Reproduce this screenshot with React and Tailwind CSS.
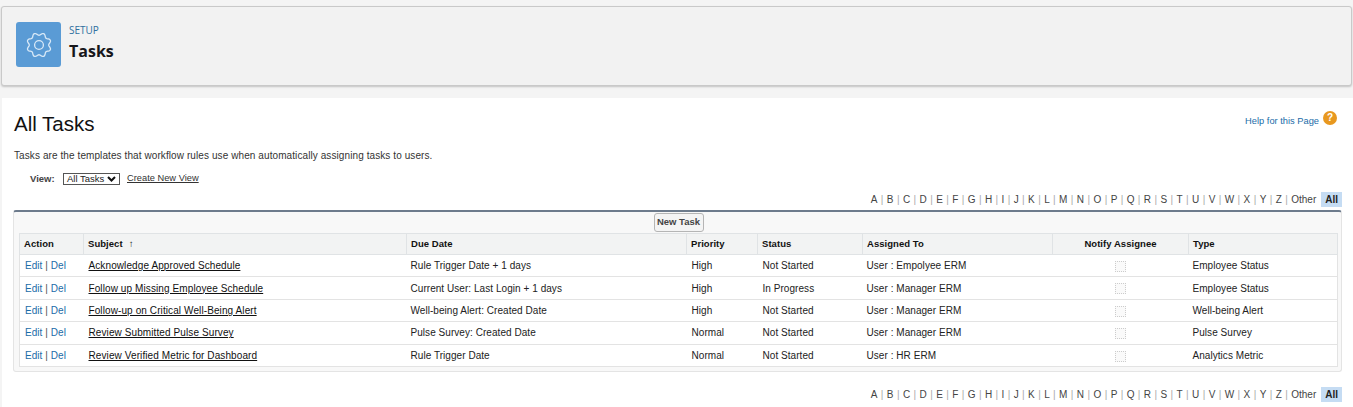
const letters = "A B C D E F G H I J K L M N O P Q R S T U V W X Y Z Other".split(" ");

const rows = [
  ["Acknowledge Approved Schedule", "Rule Trigger Date + 1 days", "High", "Not Started", "User : Empolyee ERM", "Employee Status"],
  ["Follow up Missing Employee Schedule", "Current User: Last Login + 1 days", "High", "In Progress", "User : Manager ERM", "Employee Status"],
  ["Follow-up on Critical Well-Being Alert", "Well-being Alert: Created Date", "High", "Not Started", "User : Manager ERM", "Well-being Alert"],
  ["Review Submitted Pulse Survey", "Pulse Survey: Created Date", "Normal", "Not Started", "User : Manager ERM", "Pulse Survey"],
  ["Review Verified Metric for Dashboard", "Rule Trigger Date", "Normal", "Not Started", "User : HR ERM", "Analytics Metric"],
];

function AlphaBar() {
  return (
    <div className="flex justify-end items-center h-[12px] text-[10px] text-[#444]">
      {letters.map((l, i) => (
        <span key={l} className="flex items-center">
          <span>{l}</span>
          {i < letters.length - 1 && <span className="mx-[3.4px] text-[#aaa]">|</span>}
        </span>
      ))}
      <span className="ml-[5px] px-[4px] bg-[#c5dcf3] font-bold text-[#222]">All</span>
    </div>
  );
}

function Gear() {
  // wavy ring with eight soft teeth
  const steps = 120;
  let d = "";
  for (let i = 0; i < steps; i++) {
    const a = (i / steps) * Math.PI * 2;
    const r = 11 + 1.3 * Math.cos(8 * a + Math.PI);
    d += `${i ? "L" : "M"}${(13 + r * Math.cos(a)).toFixed(2)} ${(13 + r * Math.sin(a)).toFixed(2)} `;
  }
  return (
    <svg width="26" height="26" viewBox="0 0 26 26" fill="none" stroke="#d9e9f7" strokeWidth="1.3">
      <path d={d + "Z"} />
      <circle cx="13" cy="13" r="4.4" />
    </svg>
  );
}

export default function App() {
  return (
    <div className="w-[1353px] h-[407px] overflow-hidden bg-[#f4f4f4] font-['Liberation_Sans',Arial,sans-serif] pt-[6px]">
      {/* Page header */}
      <div className="mx-[1px] h-[80px] bg-[#f2f2f2] border border-[#c9c9c9] rounded-[3px] shadow-[0_1px_2px_rgba(0,0,0,0.2)] flex items-center pl-[14px] gap-[8px]">
        <div className="w-[45px] h-[45px] -mt-[3px] rounded-[3px] bg-[#5a9bd5] flex items-center justify-center">
          <Gear />
        </div>
        <div className="font-['Open_Sans',sans-serif] -mt-[3px]">
          <div className="text-[10px] leading-[13px] text-[#2f6f9f]">SETUP</div>
          <div className="text-[16px] leading-[27px] mt-[1px] font-bold text-[#16161a]">Tasks</div>
        </div>
      </div>

      {/* Content */}
      <div className="mt-[12px] ml-[2px] bg-white h-[320px] pl-[11px] pr-[11px] pt-[13px]">
        <div className="flex justify-between items-start">
          <h1 className="text-[20.5px] ml-[1px] leading-[26px] text-[#111]">All Tasks</h1>
          <div className="flex items-start gap-[4px] text-[9.3px] text-[#1b6ca8] pr-[5px]">
            <span className="mt-[4px]">Help for this Page</span>
            <span className="w-[14px] h-[14px] rounded-full bg-[#e8981f] text-white font-bold text-[10px] leading-[14px] text-center">?</span>
          </div>
        </div>
        <p className="mt-[13px] ml-[1px] text-[10px] tracking-[0.09px] leading-[12px] text-[#333]">
          Tasks are the templates that workflow rules use when automatically assigning tasks to users.
        </p>
        <div className="mt-[10px] ml-[17px] flex items-center text-[10px] text-[#222] h-[14px]">
          <span className="font-bold text-[#444] w-[33px] text-[9.5px]">View:</span>
          <span className="flex items-center justify-between w-[57px] h-[12px] border border-[#555] px-[3px] text-[9.5px] leading-none">
            All Tasks
            <svg width="9" height="6" viewBox="0 0 9 6" fill="none" stroke="#111" strokeWidth="2"><path d="M1 1l3.5 3.5L8 1" /></svg>
          </span>
          <span className="ml-[7px] text-[9.3px] underline text-[#333]">Create New View</span>
        </div>

        <div className="mt-[7px]"><AlphaBar /></div>

        {/* Related list */}
        <div className="mt-[5px] h-[162px] border border-[#e4e4e4] border-t-2 border-t-[#6d7b8c] rounded-[3px] bg-[#f8f8f8] px-[5px]">
          <div className="h-[21px] relative">
            <button className="absolute top-[1px] left-1/2 -translate-x-1/2 ml-[1px] h-[19px] w-[50px] border border-[#b5b5b5] rounded-[3px] bg-[#f4f4f4] text-[9.5px] font-bold text-[#444]">New Task</button>
          </div>
          <table className="w-[1318px] table-fixed border-collapse bg-white text-[10px] tracking-[0.05px] text-[#222]">
            <colgroup>
              <col className="w-[64px]" />
              <col className="w-[323px]" />
              <col className="w-[280px]" />
              <col className="w-[71px]" />
              <col className="w-[105px]" />
              <col className="w-[190px]" />
              <col className="w-[136px]" />
              <col className="w-[149px]" />
            </colgroup>
            <thead>
              <tr className="h-[21px] bg-[#f2f3f3] font-bold text-[#111]">
                {["Action", "Subject", "Due Date", "Priority", "Status", "Assigned To", "Notify Assignee", "Type"].map((h) => (
                  <th key={h} className={`border border-[#e0e3e5] px-[4px] text-[9.5px] font-bold ${h === "Notify Assignee" ? "text-center" : "text-left"}`}>
                    {h}
                    {h === "Subject" && <span className="ml-[6px] font-normal">↑</span>}
                  </th>
                ))}
              </tr>
            </thead>
            <tbody>
              {rows.map((r) => (
                <tr key={r[0]} className="h-[22.4px] border border-[#e3e3e3]">
                  <td className="px-[5px] text-[#1b6ca8] whitespace-nowrap">
                    Edit <span className="text-[#555]">|</span> Del
                  </td>
                  <td className="px-[5px] underline tracking-[0.1px] text-[#111] whitespace-nowrap">{r[0]}</td>
                  <td className="px-[4px] whitespace-nowrap">{r[1]}</td>
                  <td className="px-[5px]">{r[2]}</td>
                  <td className="px-[5px]">{r[3]}</td>
                  <td className="px-[4px]">{r[4]}</td>
                  <td className="text-center">
                    <span className="inline-block align-middle w-[11px] h-[11px] border border-dotted border-[#ccc] bg-[#fafafa]" />
                  </td>
                  <td className="px-[4px]">{r[5]}</td>
                </tr>
              ))}
            </tbody>
          </table>
        </div>

        <div className="mt-[16px]"><AlphaBar /></div>
      </div>
    </div>
  );
}
